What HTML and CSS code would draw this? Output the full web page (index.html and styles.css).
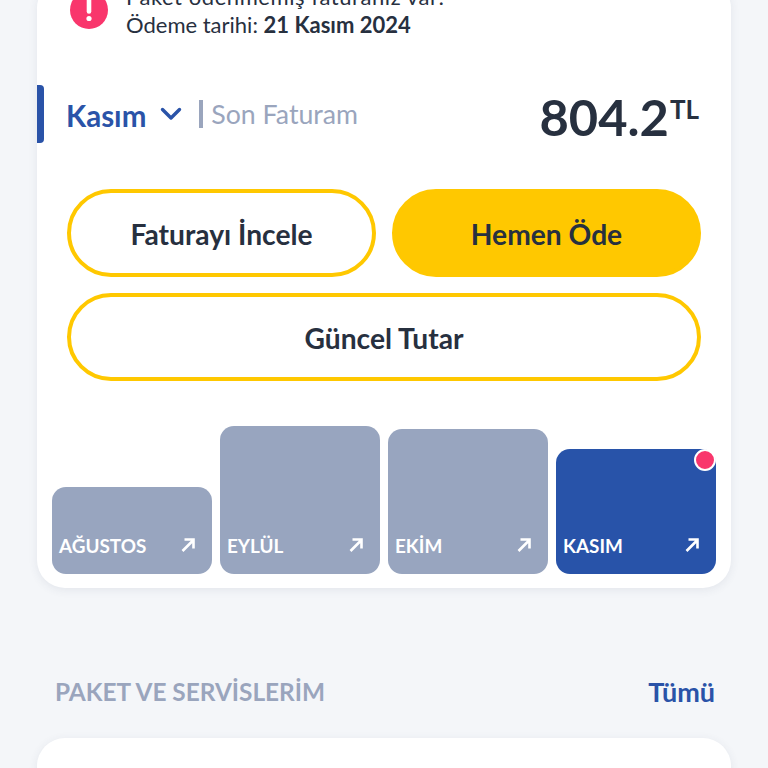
FILE: index.html
```html
<!DOCTYPE html>
<html lang="tr">
<head>
<meta charset="utf-8">
<title>Son Faturam</title>
<link rel="stylesheet" href="styles.css">
</head>
<body>
<main class="page">
  <section class="card bill">
    <div class="alert">
      <svg class="alert-icon" viewBox="0 0 38 38" aria-hidden="true"><circle cx="19" cy="19" r="19" fill="#f9366c"/><path d="M19 9.5v11" stroke="#fff" stroke-width="4.6" stroke-linecap="round"/><circle cx="19" cy="27.5" r="2.6" fill="#fff"/></svg>
      <p class="alert-text"><span class="alert-first">Paket ödenmemiş faturanız var:</span><br>Ödeme tarihi: <b>21 Kasım 2024</b></p>
    </div>
    <div class="summary">
      <span class="accent"></span>
      <span class="month">Kasım</span>
      <svg class="chevron" viewBox="0 0 22 14" aria-hidden="true"><path d="M2.5 2.5 11 11l8.500-8.500" fill="none" stroke="#2a53a8" stroke-width="3.400" stroke-linecap="round" stroke-linejoin="round"/></svg>
      <span class="period">Son Faturam</span>
      <span class="amount">804.2<sup>TL</sup></span>
    </div>
    <div class="actions">
      <button class="btn">Faturayı İncele</button>
      <button class="btn primary">Hemen Öde</button>
      <button class="btn wide">Güncel Tutar</button>
    </div>
    <div class="bars">
      <div class="bar h1"><span>AĞUSTOS</span><svg class="arrow" viewBox="0 0 16 16" aria-hidden="true"><path d="M2.500 14 13 3.500M4.500 2.500H13.500V11.500" fill="none" stroke="#fff" stroke-width="2.600"/></svg></div>
      <div class="bar h2"><span>EYLÜL</span><svg class="arrow" viewBox="0 0 16 16" aria-hidden="true"><path d="M2.500 14 13 3.500M4.500 2.500H13.500V11.500" fill="none" stroke="#fff" stroke-width="2.600"/></svg></div>
      <div class="bar h3"><span>EKİM</span><svg class="arrow" viewBox="0 0 16 16" aria-hidden="true"><path d="M2.500 14 13 3.500M4.500 2.500H13.500V11.500" fill="none" stroke="#fff" stroke-width="2.600"/></svg></div>
      <div class="bar h4 current"><span>KASIM</span><svg class="arrow" viewBox="0 0 16 16" aria-hidden="true"><path d="M2.500 14 13 3.500M4.500 2.500H13.500V11.500" fill="none" stroke="#fff" stroke-width="2.600"/></svg><i class="dot"></i></div>
    </div>
  </section>
  <div class="section-head">
    <h2>PAKET VE SERVİSLERİM</h2>
    <a href="#">Tümü</a>
  </div>
  <section class="card next"></section>
</main>
</body>
</html>
```
FILE: styles.css
```css
* { box-sizing: border-box; }
html, body { margin: 0; height: 100%; }
body {
  background: #f4f6f9;
  overflow: hidden;
  font-family: "Lato", "Liberation Sans", sans-serif;
  color: #27303f;
}
.page { padding: 0 37px; height: 768px; overflow: hidden; }
.card {
  background: #fff;
  border-radius: 28px;
  box-shadow: 0 2px 10px rgba(60, 70, 100, 0.09);
}
.bill {
  margin-top: -20px;
  padding: 0 15px 14px;
  height: 608px;
  display: flex;
  flex-direction: column;
}
.alert {
  display: flex;
  gap: 18px;
  padding: 2px 0 0 18px;
  height: 105px;
}
.alert-icon { width: 38px; height: 38px; margin-top: 9px; flex: none; }
.alert-text { margin: 0; font-size: 22px; line-height: 28px; padding-top: 1px; font-weight: 400; }
.alert-first { letter-spacing: 0.56px; }
.alert-text b { font-weight: 700; }
.summary {
  position: relative;
  display: flex;
  align-items: center;
  height: 58px;
  padding: 0 17px 0 15px;
}
.accent {
  position: absolute;
  left: -15px;
  top: 0;
  width: 7px;
  height: 58px;
  background: #2a53a8;
  border-radius: 0 4px 4px 0;
}
.month { font-size: 29.5px; font-weight: 700; color: #2a53a8; margin-left: -1px; padding-top: 2px; }
.chevron { width: 22px; height: 14px; margin-left: 14px; }
.period {
  margin-left: 17px;
  padding-left: 8px;
  border-left: 4px solid #9aa5bd;
  font-size: 26.7px;
  line-height: 28px;
  color: #9aa5bd;
}
.amount {
  margin-left: auto;
  font-size: 50.6px;
  font-weight: 700;
  line-height: 58px;
  display: flex;
  align-items: flex-start;
  padding-top: 3px;
  height: 58px;
}
.amount sup { font-size: 26px; line-height: 1; margin-top: 8px; margin-left: 1px; }
.actions {
  display: grid;
  grid-template-columns: 1fr 1fr;
  gap: 16px;
  margin: 46px 15px 0;
}
.btn {
  height: 88px;
  padding-top: 2px;
  border: 4px solid #ffc800;
  border-radius: 44px;
  background: #fff;
  font: 700 28.2px "Lato", "Liberation Sans", sans-serif;
  color: #27303f;
}
.primary { background: #ffc800; }
.wide { grid-column: 1 / 3; }
.bars {
  display: flex;
  align-items: flex-end;
  gap: 8px;
  margin-top: auto;
}
.bar {
  position: relative;
  flex: 1;
  display: flex;
  align-items: flex-end;
  justify-content: space-between;
  padding: 0 16px 17px 7px;
  border-radius: 14px;
  background: #98a5bf;
  color: #fff;
  font-size: 18.9px;
  font-weight: 700;
  line-height: 22px;
}
.h1 { height: 87px; }
.h2 { height: 148px; }
.h3 { height: 145px; }
.h4 { height: 125px; }
.current { background: #2853a9; }
.arrow { width: 16px; height: 16px; margin-bottom: 4px; }
.dot {
  position: absolute;
  top: 0;
  right: 0;
  width: 22px;
  height: 22px;
  border: 2px solid #fff;
  border-radius: 50%;
  background: #f9366c;
}
.section-head {
  display: flex;
  justify-content: space-between;
  align-items: center;
  margin-top: 84px;
  padding: 0 16px 2px 18px;
  height: 40px;
}
.section-head h2 { margin: 0; font-size: 24.4px; font-weight: 700; color: #9aa5bd; }
.section-head a { font-size: 27px; font-weight: 700; color: #2a53a8; text-decoration: none; }
.next { margin-top: 26px; height: 120px; }
```
